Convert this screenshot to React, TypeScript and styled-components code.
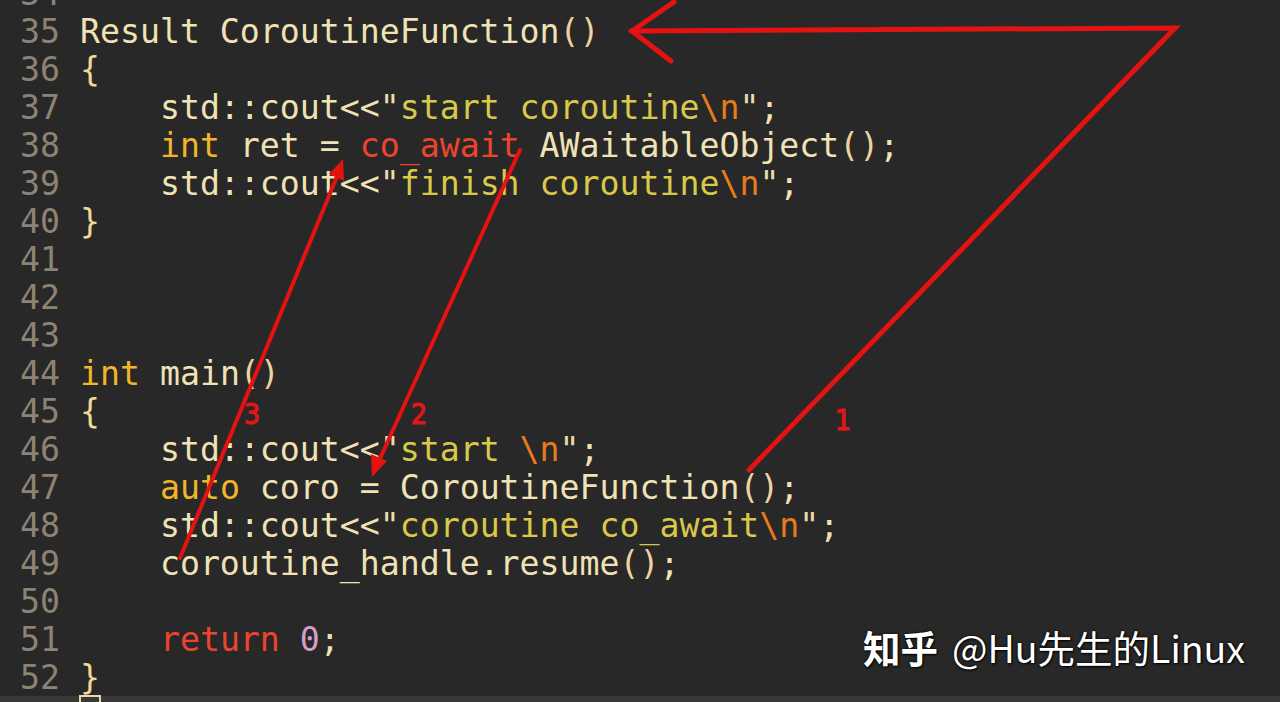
import React from "react";
import styled, { createGlobalStyle } from "styled-components";

const GlobalStyle = createGlobalStyle`
  html, body {
    margin: 0;
    padding: 0;
    background: #282828;
    overflow: hidden;
  }
`;

type Kind = "id" | "type" | "kw" | "str" | "esc" | "num" | "quote" | "brace" | "paren";

const colors: Record<Kind, string> = {
  id: "#f0e2b4",
  type: "#f0b628",
  kw: "#ec442e",
  str: "#d9c948",
  esc: "#ea7a1c",
  num: "#d89cc8",
  quote: "#ecdcaa",
  brace: "#eed896",
  paren: "#eed3a0",
};

type Tok = [Kind, string];

const S = (s: string): Tok => ["id", s];

const lines: { n: number; toks: Tok[] }[] = [
  { n: 34, toks: [] },
  { n: 35, toks: [S("Result CoroutineFunction"), ["paren", "()"]] },
  { n: 36, toks: [["brace", "{"]] },
  {
    n: 37,
    toks: [S("    std::cout<<"), ["quote", '"'], ["str", "start coroutine"], ["esc", "\\n"], ["quote", '"'], S(";")],
  },
  { n: 38, toks: [S("    "), ["type", "int"], S(" ret = "), ["kw", "co_await"], S(" AWaitableObject"), ["paren", "()"], S(";")] },
  {
    n: 39,
    toks: [S("    std::cout<<"), ["quote", '"'], ["str", "finish coroutine"], ["esc", "\\n"], ["quote", '"'], S(";")],
  },
  { n: 40, toks: [["brace", "}"]] },
  { n: 41, toks: [] },
  { n: 42, toks: [] },
  { n: 43, toks: [] },
  { n: 44, toks: [["type", "int"], S(" main"), ["paren", "()"]] },
  { n: 45, toks: [["brace", "{"]] },
  {
    n: 46,
    toks: [S("    std::cout<<"), ["quote", '"'], ["str", "start "], ["esc", "\\n"], ["quote", '"'], S(";")],
  },
  { n: 47, toks: [S("    "), ["type", "auto"], S(" coro = CoroutineFunction"), ["paren", "()"], S(";")] },
  {
    n: 48,
    toks: [S("    std::cout<<"), ["quote", '"'], ["str", "coroutine co_await"], ["esc", "\\n"], ["quote", '"'], S(";")],
  },
  { n: 49, toks: [S("    coroutine_handle.resume"), ["paren", "()"], S(";")] },
  { n: 50, toks: [] },
  { n: 51, toks: [S("    "), ["kw", "return"], S(" "), ["num", "0"], S(";")] },
  { n: 52, toks: [["brace", "}"]] },
];

const Editor = styled.div`
  position: relative;
  width: 1280px;
  height: 702px;
  overflow: hidden;
  background: #282828;
  display: flex;
  flex-direction: column;
`;

const CodeList = styled.div`
  margin-top: -25px;
  margin-bottom: -1px;
  font-family: "DejaVu Sans Mono", monospace;
  font-size: 33.2px;
  line-height: 38px;
  flex: none;
`;

const Line = styled.div`
  display: grid;
  grid-template-columns: 60px 1fr;
  column-gap: 20px;
  height: 38px;
  white-space: pre;
`;

const LineNo = styled.span`
  text-align: right;
  color: #8e8272;
`;

const Code = styled.span``;

const Token = styled.span<{ $kind: Kind }>`
  color: ${(p) => colors[p.$kind]};
`;

const BottomBar = styled.div`
  flex: 1;
  background: #3a3937;
  padding-left: 79px;
  display: flex;
  align-items: flex-start;
`;

const CursorBox = styled.div`
  width: 18px;
  height: 10px;
  margin-top: -1px;
  border: 2px solid #e9d9a6;
  border-bottom: none;
`;

const Annotations = styled.svg`
  position: absolute;
  left: 0;
  top: 0;
  pointer-events: none;
`;

const Label = styled.text`
  font-family: "Liberation Sans Narrow", "DejaVu Sans Condensed", "Liberation Sans", sans-serif;
  font-size: 28px;
  fill: #e11616;
  stroke: #e11616;
  stroke-width: 1.2px;
`;

const Watermark = styled.div`
  position: absolute;
  left: 863px;
  top: 623px;
  font-family: "Noto Sans CJK SC", "Noto Sans", sans-serif;
  font-size: 37.5px;
  line-height: 48px;
  color: #ffffff;
  white-space: nowrap;
  text-shadow: 0 0 3px rgba(0, 0, 0, 0.9), 1px 1px 2px rgba(0, 0, 0, 0.9);
`;

const Brand = styled.span`
  font-weight: 600;
  margin-right: 14px;
`;

export default function App() {
  return (
    <>
      <GlobalStyle />
      <Editor>
        <CodeList>
          {lines.map((l) => (
            <Line key={l.n}>
              <LineNo>{l.n}</LineNo>
              <Code>
                {l.toks.map((t, i) => (
                  <Token key={i} $kind={t[0]}>
                    {t[1]}
                  </Token>
                ))}
              </Code>
            </Line>
          ))}
        </CodeList>
        <BottomBar>
          <CursorBox />
        </BottomBar>
        <Annotations width="1280" height="702" viewBox="0 0 1280 702">
          <g stroke="#e51212" strokeLinecap="round" strokeLinejoin="miter" fill="none">
            <polyline points="749,470 1175,28 631,31" strokeWidth="5" />
            <polyline points="674,2 632,31 671,61" strokeWidth="5" />
            <line x1="520" y1="150" x2="378" y2="463" strokeWidth="4" />
            <line x1="180" y1="558" x2="338" y2="174" strokeWidth="4" />
          </g>
          <g fill="#e51212">
            <polygon points="372,477 387,461 371,454" />
            <polygon points="343,159 344,181 329,174" />
          </g>
          <Label x="244" y="424">3</Label>
          <Label x="411" y="424">2</Label>
          <Label x="835" y="430">1</Label>
        </Annotations>
        <Watermark>
          <Brand>知乎</Brand>@Hu先生的Linux
        </Watermark>
      </Editor>
    </>
  );
}
